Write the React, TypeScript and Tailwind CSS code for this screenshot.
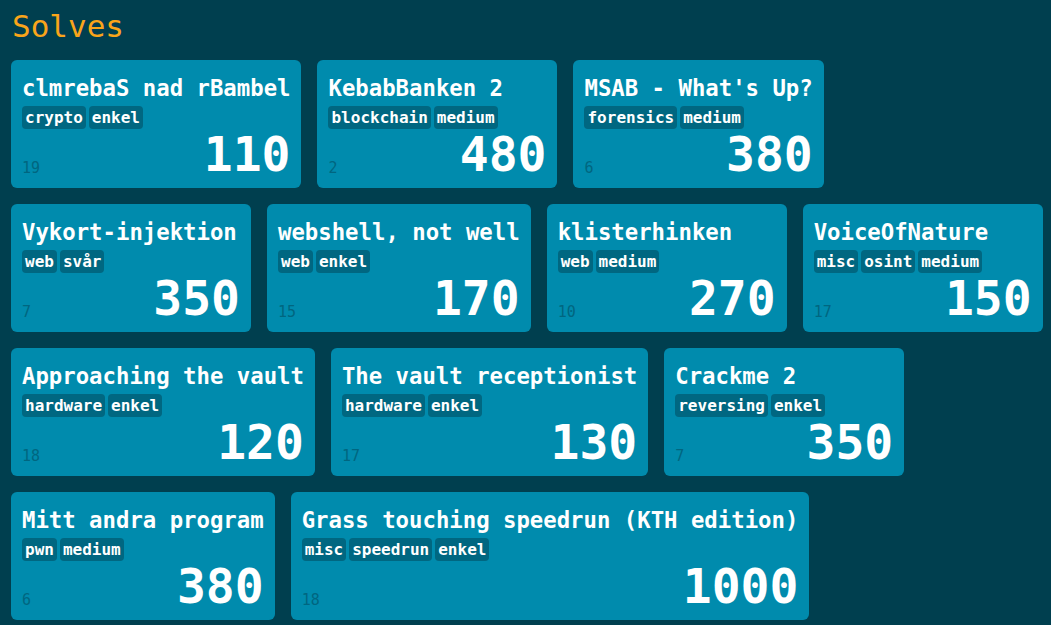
import React from 'react';

interface Solve {
    name: string;
    tags: string[];
    solves: number;
    points: number;
}

const solves: Solve[] = [
    { name: 'clmrebaS nad rBambel', tags: ['crypto', 'enkel'], solves: 19, points: 110 },
    { name: 'KebabBanken 2', tags: ['blockchain', 'medium'], solves: 2, points: 480 },
    { name: "MSAB - What's Up?", tags: ['forensics', 'medium'], solves: 6, points: 380 },
    { name: 'Vykort-injektion', tags: ['web', 'svår'], solves: 7, points: 350 },
    { name: 'webshell, not well', tags: ['web', 'enkel'], solves: 15, points: 170 },
    { name: 'klisterhinken', tags: ['web', 'medium'], solves: 10, points: 270 },
    { name: 'VoiceOfNature', tags: ['misc', 'osint', 'medium'], solves: 17, points: 150 },
    { name: 'Approaching the vault', tags: ['hardware', 'enkel'], solves: 18, points: 120 },
    { name: 'The vault receptionist', tags: ['hardware', 'enkel'], solves: 17, points: 130 },
    { name: 'Crackme 2', tags: ['reversing', 'enkel'], solves: 7, points: 350 },
    { name: 'Mitt andra program', tags: ['pwn', 'medium'], solves: 6, points: 380 },
    { name: 'Grass touching speedrun (KTH edition)', tags: ['misc', 'speedrun', 'enkel'], solves: 18, points: 1000 },
];

function SolveCard({ solve }: { solve: Solve }) {
    return (
        <div className="flex flex-col h-[128px] min-w-[240px] rounded-md bg-[#008bad] px-[11px] pt-[14px] pb-[10px] text-white">
            <div className="text-[22.3px] font-bold leading-7 whitespace-nowrap">{solve.name}</div>
            <div className="flex gap-[3px] mt-[4px]">
                {solve.tags.map((tag) => (
                    <span key={tag} className="rounded bg-[#006781] px-[3px] text-[16px] font-bold leading-[23px]">
                        {tag}
                    </span>
                ))}
            </div>
            <div className="mt-auto flex items-end justify-between">
                <span className="text-[15px] leading-5 text-[#006680]">{solve.solves}</span>
                <span className="text-[48px] font-bold leading-none">{solve.points}</span>
            </div>
        </div>
    );
}

export default function App() {
    return (
        <div className="min-h-screen bg-[#003f4f] pl-[11px] pr-[6px] pt-[4px] pb-4" style={{ fontFamily: '"DejaVu Sans Mono", "Liberation Mono", monospace' }}>
            <h1 className="text-[31px] leading-[44px] text-[#f9a51a] mb-[12px] pl-[1px]">Solves</h1>
            <div className="flex flex-wrap gap-4">
                {solves.map((s) => (
                    <SolveCard key={s.name} solve={s} />
                ))}
            </div>
        </div>
    );
}
